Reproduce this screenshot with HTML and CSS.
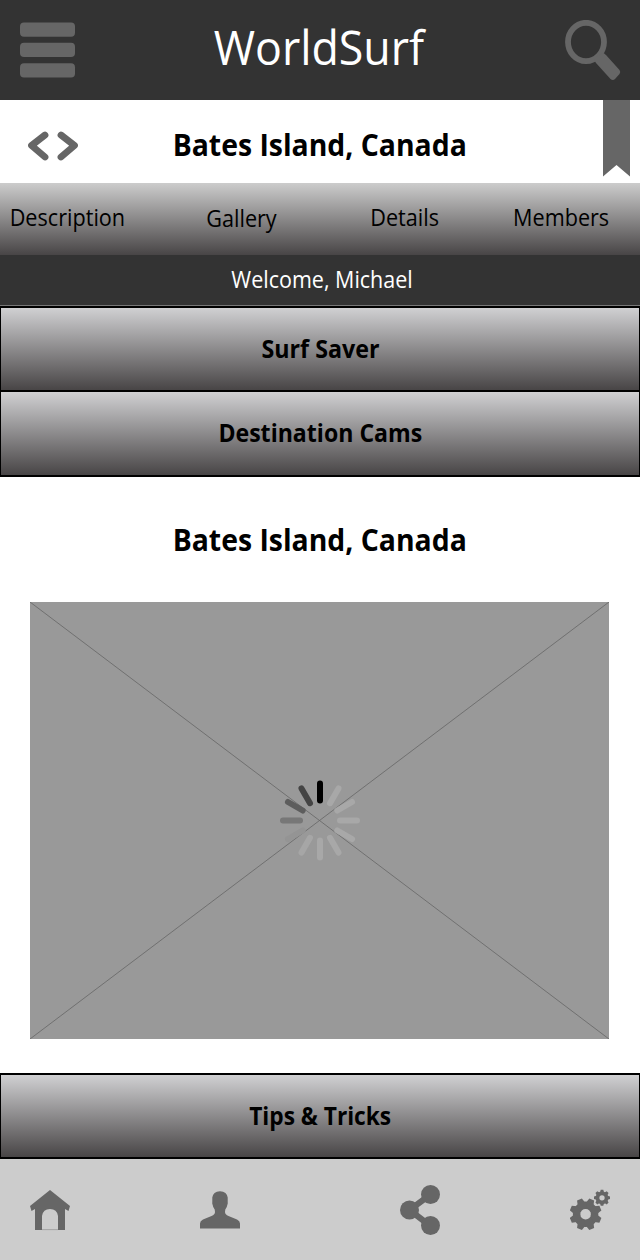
FILE: index.html
```html
<!DOCTYPE html>
<html lang="en">
<head>
<meta charset="utf-8">
<title>WorldSurf</title>
<link rel="stylesheet" href="styles.css">
</head>
<body>
<main class="app">
  <header class="topbar">
    <svg class="menu" viewBox="0 0 56 56"><rect y=".4" width="55" height="14.300" rx="4"/><rect y="20.800" width="55" height="14.300" rx="4"/><rect y="41.200" width="55" height="14.300" rx="4"/></svg>
    <h1 class="brand"><span class="fit fit-brand">WorldSurf</span></h1>
    <svg class="search" viewBox="0 0 56 61"><ellipse cx="21" cy="22" rx="18" ry="19.200" fill="none" stroke="#666" stroke-width="5.800"/><path d="M30 38L37 33Q39.500 33 41 35L54.500 50Q56 52 54.500 54L50 59Q48 61 45.500 59L31 43Q29 40.500 30 38Z"/></svg>
  </header>
  <section class="location">
    <svg class="arrows" viewBox="0 0 50 30"><path d="M17 4L3.500 14.500L17 26M33 4L46.500 14.500L33 26"/></svg>
    <h2 class="place"><span class="fit fit-place">Bates Island, Canada</span></h2>
    <svg class="bookmark" viewBox="0 0 27 77"><path d="M0 0H27V76.500L13.500 65L0 76.500Z"/></svg>
  </section>
  <nav class="tabs">
    <a class="tab"><span class="fit fit-tab">Description</span></a>
    <a class="tab tab-gallery"><span class="fit fit-tab">Gallery</span></a>
    <a class="tab"><span class="fit fit-tab">Details</span></a>
    <a class="tab tab-members"><span class="fit fit-tab">Members</span></a>
  </nav>
  <p class="welcome"><span class="fit fit-welcome">Welcome, Michael</span></p>
  <button class="bar"><span class="fit fit-saver">Surf Saver</span></button>
  <button class="bar bar-joined"><span class="fit fit-cams">Destination Cams</span></button>
  <section class="media">
    <h2 class="place"><span class="fit fit-place">Bates Island, Canada</span></h2>
    <svg class="photo" viewBox="0 0 579 437">
      <rect width="579" height="437" fill="#999"/>
      <path d="M0 0L579 437M579 0L0 437" stroke="#666" stroke-width=".8"/>
      <g transform="translate(290 218.500)" stroke-width="6" stroke-linecap="round">
        <path d="M0-20V-37" stroke="#000"/>
        <path d="M0-20V-37" stroke="#a8a8a8" transform="rotate(30)"/>
        <path d="M0-20V-37" stroke="#a8a8a8" transform="rotate(60)"/>
        <path d="M0-20V-37" stroke="#a8a8a8" transform="rotate(90)"/>
        <path d="M0-20V-37" stroke="#a8a8a8" transform="rotate(120)"/>
        <path d="M0-20V-37" stroke="#a8a8a8" transform="rotate(150)"/>
        <path d="M0-20V-37" stroke="#a8a8a8" transform="rotate(180)"/>
        <path d="M0-20V-37" stroke="#a6a6a6" transform="rotate(210)"/>
        <path d="M0-20V-37" stroke="#949494" transform="rotate(240)"/>
        <path d="M0-20V-37" stroke="#777" transform="rotate(270)"/>
        <path d="M0-20V-37" stroke="#5d5d5d" transform="rotate(300)"/>
        <path d="M0-20V-37" stroke="#444" transform="rotate(330)"/>
      </g>
    </svg>
  </section>
  <button class="bar"><span class="fit fit-tips">Tips &amp; Tricks</span></button>
  <footer class="dock">
    <svg class="icon" viewBox="0 0 40 50"><path d="M20 5L40 21L38.500 26L35 24V45H28V31Q27 24 20 24Q13 24 12 31V45H5V24L1.500 26L0 21Z"/><path d="M12 44.600H28" stroke="#999" stroke-width=".8"/></svg>
    <svg class="icon" viewBox="0 0 40 50"><path d="M0 43.500V38.500Q0 36 3 34.500L11.500 31Q15 29.500 15 27L14.700 24.500Q13 22.500 12.700 20Q12 18.500 12.300 16.500V12.500Q13 6.500 20 6.200Q27 6.500 27.700 12.500V16.500Q28 18.500 27.300 20Q27 22.500 25.300 24.500L25 27Q25 29.500 28.500 31L37 34.500Q40 36 40 38.500V43.500Z"/></svg>
    <svg class="icon" viewBox="0 0 40 50"><path d="M30.500 9.500L9.500 25L30.500 41" fill="none" stroke="#666" stroke-width="6"/><circle cx="30.500" cy="9.500" r="9.500"/><circle cx="9.500" cy="25" r="9.500"/><circle cx="30.500" cy="40.500" r="9.500"/></svg>
    <svg class="icon" viewBox="0 0 40 50">
      <defs><g id="gear"><circle r="12.700"/><path id="tooth" d="M-4-11L-2.600-16H2.600L4-11V11L2.600 16H-2.600L-4 11Z"/><use href="#tooth" transform="rotate(45)"/><use href="#tooth" transform="rotate(90)"/><use href="#tooth" transform="rotate(135)"/><circle r="5.300" fill="#ccc"/></g></defs>
      <use href="#gear" transform="translate(15.600 29.200) rotate(22.500)"/>
      <use href="#gear" transform="translate(32 12.800) scale(.5)"/>
    </svg>
  </footer>
</main>
</body>
</html>
```
FILE: styles.css
```css
* { box-sizing: border-box; }
body { margin: 0; background: #fff; color: #000; font-family: "Open Sans", "Noto Sans", sans-serif; }
h1, h2, p { margin: 0; }
svg { display: block; flex: none; fill: #666; }
.app { width: 640px; height: 1260px; display: flex; flex-direction: column; overflow: hidden; }
.fit { display: inline-block; white-space: nowrap; }
.fit-brand { transform: scaleX(.932); }
.fit-place { transform: scaleX(.915); }
.fit-tab { transform: scaleX(.94); }
.fit-welcome { transform: scaleX(.935); }
.fit-saver { transform: scaleX(.93); }
.fit-cams { transform: scaleX(.924); }
.fit-tips { transform: scaleX(.908); }
.topbar { height: 100px; flex: none; display: grid; grid-template-columns: 56px 1fr 56px; padding: 0 19px 0 20px; background: #333; color: #fff; }
.menu { width: 56px; height: 56px; margin-top: 22px; }
.search { width: 56px; height: 61px; margin-top: 20px; }
.brand { padding-right: 3px; text-align: center; font-size: 48px; font-weight: 400; line-height: 94px; }
.location { height: 83px; flex: none; display: grid; grid-template-columns: 50px 1fr 50px; padding: 0 10px 0 28px; }
.arrows { width: 50px; height: 30px; margin-top: 31px; fill: none; stroke: #666; stroke-width: 6.800px; stroke-linecap: round; stroke-linejoin: round; }
.bookmark { width: 27px; height: 77px; justify-self: end; }
.place { text-align: center; font-size: 31px; font-weight: 700; line-height: 88px; }
.location .place { padding-right: 18px; }
.tabs { height: 72px; flex: none; display: grid; grid-template-columns: 134px 215px 112px 1fr; background: linear-gradient(#ccc, #484546); }
.tab { text-align: center; font-size: 23px; line-height: 68px; }
.tab-gallery { line-height: 70px; }
.tab-members { padding-left: 21px; }
.welcome { height: 51px; flex: none; border-bottom: 1px solid #777; background: #333; color: #fff; text-align: center; font-size: 23px; line-height: 48px; padding-left: 4px; }
.bar { width: 640px; height: 86px; flex: none; padding: 0 0 3px; border: 1px solid #000; border-width: 2px 1px; background: linear-gradient(#d0d0d2, #484546); color: #000; font: 700 25px "Open Sans", sans-serif; }
.bar-joined { height: 85px; border-top: 0; }
.media { height: 596px; flex: none; padding: 18px 31px 0 30px; }
.photo { width: 579px; height: 437px; margin-top: 19px; }
.dock { flex: 1; display: grid; grid-template-columns: 170px 200px 170px 40px; padding: 26px 30px 0; background: #ccc; }
.icon { width: 40px; height: 50px; }
```
